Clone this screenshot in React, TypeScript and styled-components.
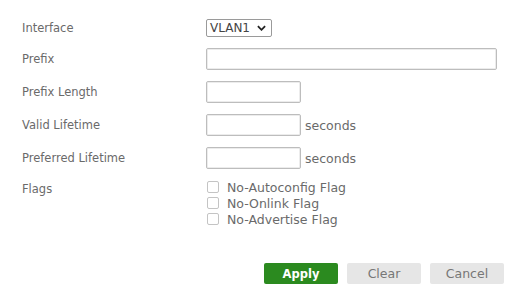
import React from 'react'
import styled, { createGlobalStyle } from 'styled-components'

const GlobalStyle = createGlobalStyle`
  html, body {
    margin: 0;
    padding: 0;
    background: #fff;
  }
  body {
    font-family: 'DejaVu Sans', 'Noto Sans', sans-serif;
    color: #6a6a6a;
  }
`

const App: React.FC = () => {
  return (
    <Page>
      <GlobalStyle />
      <Fields>
        <Row>
          <Label>Interface</Label>
          <SelectBox>
            <SelectText>VLAN1</SelectText>
            <Chevron viewBox="0 0 10 6">
              <path d="M1 1l4 4 4-4" />
            </Chevron>
          </SelectBox>
        </Row>
        <Row>
          <Label>Prefix</Label>
          <TextInput $width={291} />
        </Row>
        <Row>
          <Label>Prefix Length</Label>
          <TextInput $width={95} />
        </Row>
        <Row>
          <Label>Valid Lifetime</Label>
          <TextInput $width={95} />
          <Unit>seconds</Unit>
        </Row>
        <Row>
          <Label>Preferred Lifetime</Label>
          <TextInput $width={95} />
          <Unit>seconds</Unit>
        </Row>
        <FlagsRow>
          <Label>Flags</Label>
          <Checks>
            <Check>
              <Box type="checkbox" />
              No-Autoconfig Flag
            </Check>
            <Check>
              <Box type="checkbox" />
              No-Onlink Flag
            </Check>
            <Check>
              <Box type="checkbox" />
              No-Advertise Flag
            </Check>
          </Checks>
        </FlagsRow>
      </Fields>
      <Actions>
        <Button $primary>Apply</Button>
        <Button>Clear</Button>
        <Button>Cancel</Button>
      </Actions>
    </Page>
  )
}

const Page = styled.div({
  width: '521px',
  height: '297px',
  boxSizing: 'border-box',
  padding: '19px 17px 0 22px',
  display: 'flex',
  flexDirection: 'column',
})

const Fields = styled.div({
  display: 'flex',
  flexDirection: 'column',
  gap: '11px',
})

const Row = styled.div({
  display: 'flex',
  alignItems: 'center',
})

const FlagsRow = styled(Row)({
  alignItems: 'flex-start',
  marginTop: '1px',
})

const Label = styled.div({
  width: '184px',
  flexShrink: 0,
  fontSize: '11.5px',
  lineHeight: '16px',
  color: '#6a6a6a',
})

const SelectBox = styled.div({
  width: '66px',
  height: '18px',
  boxSizing: 'border-box',
  border: '1px solid #9a9a9a',
  borderRadius: '2px',
  background: '#fff',
  display: 'flex',
  alignItems: 'center',
  justifyContent: 'space-between',
  padding: '0 5px 0 3px',
})

const SelectText = styled.span({
  fontSize: '12px',
  color: '#444',
})

const Chevron = styled.svg({
  width: '9px',
  height: '6px',
  fill: 'none',
  stroke: '#222',
  strokeWidth: 2,
})

const TextInput = styled.input<{ $width: number }>`
  width: ${(p) => p.$width}px;
  height: 22px;
  box-sizing: border-box;
  margin: 0;
  border: 1px solid #bdbdbd;
  border-radius: 2px;
  box-shadow: inset 0 0 0 1px #ececec;
  background: #fff;
  outline: none;
`

const Unit = styled.span({
  marginLeft: '4px',
  fontSize: '12.5px',
  color: '#6a6a6a',
})

const Checks = styled.div({
  display: 'flex',
  flexDirection: 'column',
  marginTop: '-2px',
})

const Check = styled.label({
  display: 'flex',
  alignItems: 'center',
  height: '16px',
  fontSize: '12.5px',
  color: '#6a6a6a',
})

const Box = styled.input({
  appearance: 'none',
  width: '12px',
  height: '12px',
  boxSizing: 'border-box',
  margin: '0 8px 0 1px',
  border: '1px solid #c4c4c4',
  borderRadius: '2px',
  background: '#fff',
})

const Actions = styled.div({
  marginTop: 'auto',
  marginBottom: '13px',
  display: 'flex',
  justifyContent: 'flex-end',
  gap: '9px',
})

const Button = styled.button<{ $primary?: boolean }>`
  width: 74px;
  height: 21px;
  border: 0;
  border-radius: 2px;
  padding: 0;
  font-family: 'DejaVu Sans', sans-serif;
  font-size: ${(p) => (p.$primary ? '11.5px' : '12.5px')};
  font-weight: ${(p) => (p.$primary ? 700 : 400)};
  background: ${(p) => (p.$primary ? '#2b8a1f' : '#e6e6e6')};
  color: ${(p) => (p.$primary ? '#fff' : '#777')};
  cursor: pointer;
`

export default App
